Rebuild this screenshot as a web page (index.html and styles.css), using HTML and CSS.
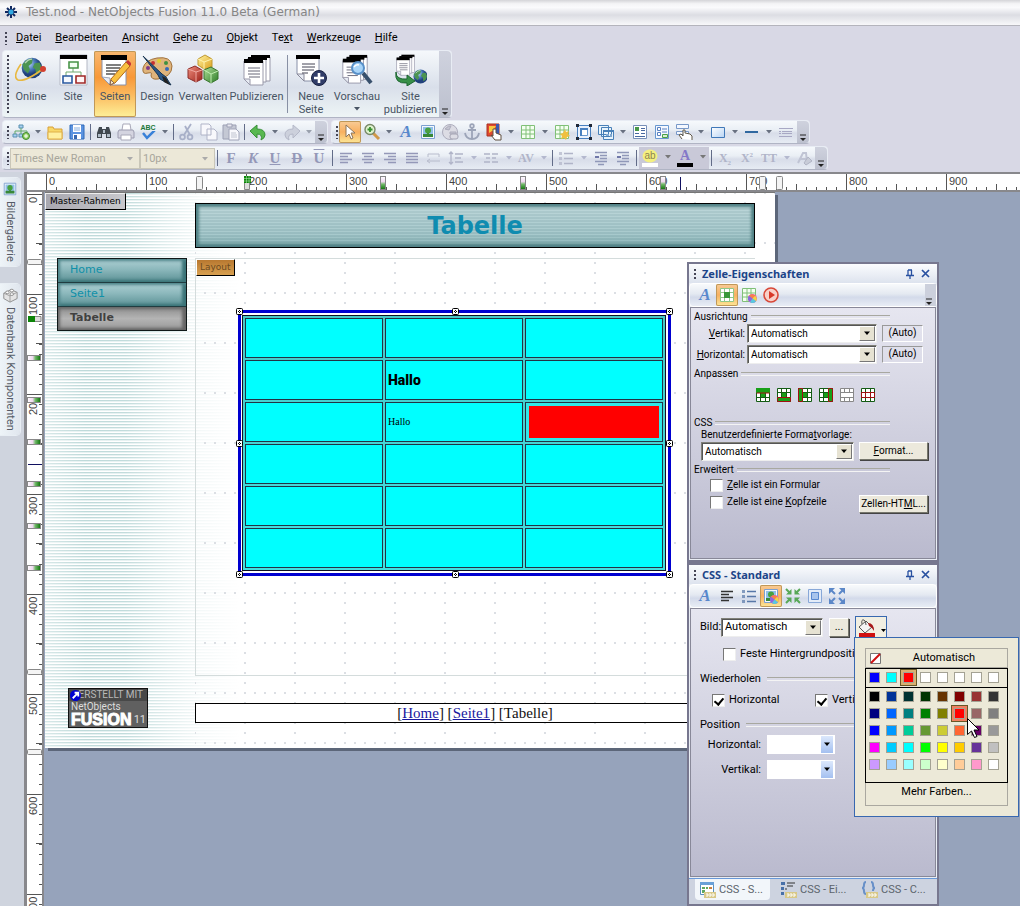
FILE: index.html
```html
<!DOCTYPE html>
<html lang="de">
<head>
<meta charset="utf-8">
<title>Test.nod - NetObjects Fusion 11.0 Beta (German)</title>
<link rel="stylesheet" href="styles.css">
</head>
<body>
<svg class="sprite" aria-hidden="true">
  <defs>
    <radialGradient id="g-globe" cx=".35" cy=".3"><stop offset="0" stop-color="#b8d8f8"/><stop offset=".6" stop-color="#4a78b8"/><stop offset="1" stop-color="#20407c"/></radialGradient>
    <linearGradient id="g-red" x2="1" y2="1"><stop offset="0" stop-color="#f09080"/><stop offset="1" stop-color="#9c2018"/></linearGradient>
    <linearGradient id="g-grn" x2="1" y2="1"><stop offset="0" stop-color="#b0e098"/><stop offset="1" stop-color="#2c7c28"/></linearGradient>
    <linearGradient id="g-yel" x2="1" y2="1"><stop offset="0" stop-color="#fff4a0"/><stop offset="1" stop-color="#dca020"/></linearGradient>
    <linearGradient id="g-blu" x2="1" y2="1"><stop offset="0" stop-color="#fff"/><stop offset="1" stop-color="#b8d4f4"/></linearGradient>
    <linearGradient id="g-mark" x2="0" y2="1"><stop offset="0" stop-color="#fff"/><stop offset=".4" stop-color="#f0d8f0"/><stop offset=".6" stop-color="#70b868"/><stop offset="1" stop-color="#0c7008"/></linearGradient>
    <linearGradient id="g-markh"><stop offset="0" stop-color="#fff"/><stop offset=".4" stop-color="#f0d8f0"/><stop offset=".6" stop-color="#70b868"/><stop offset="1" stop-color="#0c7008"/></linearGradient>
  </defs>
  <symbol id="globe" viewBox="0 0 32 32"><circle cx="16" cy="16" r="15" fill="url(#g-globe)"/><path d="M7 5q7-4 10-2l-1 6-5 4 2 5-3 6-6-6-2-7zM20 9l7-1 3 7-3 8-5 3-1-8-4-3z" fill="#4c9450"/><path d="M6 9q4-6 10-6" stroke="#fff" stroke-width="2" fill="none" opacity=".6"/></symbol>
  <symbol id="page" viewBox="0 0 32 32"><path d="M3 2h24v29H11l-8-8z" fill="#fff" stroke="#8890a8"/><path d="M3 23l8 8v-7z" fill="#e8ecf4" stroke="#8890a8" stroke-width=".8"/><path d="M2 1h26v5H2z" fill="#000"/></symbol>
  <symbol id="pages" viewBox="0 0 32 32"><path d="M10 3h19v24H10z" fill="#fff" stroke="#99a"/><path d="M10 1h19v3H10z"/><path d="M7 4h18v24H7z" fill="#fff" stroke="#99a"/><path d="M7 3h19v3H7z"/><path d="M3 7h19v24H9l-6-6z" fill="#fff" stroke="#99a"/><path d="M3 5h19v4H3z"/><path d="M3 25l6 6v-6z" fill="#e8ecf4" stroke="#99a"/><path d="M7 14h12M7 17h12M7 20h12M8 23h11" stroke="#667"/></symbol>
  <symbol id="i-online" viewBox="0 0 32 32"><use href="#globe" x="6" y="3" width="22" height="22"/><path d="M6 10Q-3 23 3 26 11 28 29 14" fill="none" stroke="#e8b840" stroke-width="1.6"/><circle cx="28" cy="15" r="3" fill="#d44030"/></symbol>
  <symbol id="i-site" viewBox="0 0 32 32"><path d="M3 1h27v30H3z" fill="#fff" stroke="#b4b8c4"/><path d="M3 1h27v4H3z"/><path d="M16 14v4M9 23v-5h15v5" fill="none" stroke="#70a870"/><g stroke-width="1.6"><path d="M12 8h9v6h-9z" fill="#f4fff4" stroke="#489448"/><path d="M6 22h9v7H6z" fill="#f4f8ff" stroke="#2858a0"/><path d="M19 22h9v7h-9z" fill="#fff4f4" stroke="#a02828"/></g></symbol>
  <symbol id="i-seiten" viewBox="0 0 32 32"><use href="#page" width="32" height="32"/><path d="M7 11h15M7 14h14M7 17h12M7 20h9" stroke="#555" stroke-width="1.4"/><path d="M27 8l4 4-15 17-5 2 1-6z" fill="#f8c040" stroke="#b06818"/><path d="M27 8l2-2 4 4-2 2z" fill="#c83838"/><path d="M11 31l1-5 3 3z" fill="#fff0c8" stroke="#865"/></symbol>
  <symbol id="i-design" viewBox="0 0 32 32"><path d="M16 4q14-2 15 8 0 11-14 13-7 1-7-4 2-3-3-2-6 2-5-5Q4 6 16 4z" fill="#dfb47c" stroke="#a07038"/><g><circle cx="12" cy="9" r="2" fill="#c83030"/><circle cx="18" cy="7" r="2" fill="#e0d030"/><circle cx="25" cy="9" r="2" fill="#409040"/><circle cx="26" cy="15" r="2" fill="#3868b8"/><circle cx="7" cy="14" r="2" fill="#803888"/></g><path d="M2 2l19 18 4 3 3 5 2 3-6-3-5-3-2-4z" fill="#2c5888" stroke="#183450"/><path d="M21 22l4 2 4 7-6-3z" fill="#222"/></symbol>
  <symbol id="i-verwalten" viewBox="0 0 32 32"><path d="M11 5l7-4 7 4v8l-8 2-6-4z" fill="url(#g-yel)" stroke="#c09830"/><path d="M11 5l6 3 8-3M17 8v7" stroke="#fff4b0" fill="none"/><path d="M1 15l7-3 7 4v9l-6 3-8-4z" fill="url(#g-red)" stroke="#8c2c28"/><path d="M1 15l8 3 6-2M9 18v10" stroke="#f0a8a0" fill="none"/><path d="M17 16l7-3 7 4v8l-7 4-7-4z" fill="url(#g-grn)" stroke="#38742c"/><path d="M17 16l7 4 7-3M24 20v9" stroke="#c0ecb0" fill="none"/></symbol>
  <symbol id="i-neu" viewBox="0 0 32 32"><path d="M2 2h22v25H9l-7-7z" fill="#fff" stroke="#8890a8"/><path d="M2 20l7 7v-7z" fill="#e8ecf4" stroke="#889"/><path d="M1 1h24v4H1z"/><path d="M7 10h13M7 13h13M7 16h12M7 19h6" stroke="#445"/><circle cx="24" cy="24" r="7.500" fill="#303c68" stroke="#182040"/><path d="M24 19v10M19 24h10" stroke="#fff" stroke-width="2.600"/></symbol>
  <symbol id="i-vorschau" viewBox="0 0 32 32"><use href="#pages" x="-1" width="30" height="30"/><path d="M22 19l8 10" stroke="#38506c" stroke-width="4"/><circle cx="17" cy="14" r="6" fill="#a8d4f8" stroke="#5890c8" stroke-width="2"/><path d="M13 13q2-3 5-2" stroke="#fff" fill="none" stroke-width="1.500"/></symbol>
  <symbol id="i-sitepub" viewBox="0 0 32 32"><use href="#pages" x="-1" y="0" width="23" height="22"/><use href="#globe" x="18" y="15" width="15" height="15"/><path d="M1 18q0 8 11 7v-4l8 6-8 5v-3Q-1 30 1 18z" fill="#389048" stroke="#1c6430"/></symbol>
  <symbol id="i-new" viewBox="0 0 18 18"><path d="M7 2h4v3H7zM1 11h4v3H1zM7 11h4v3H7z" fill="#a8d0f0" stroke="#5890b0"/><path d="M9 5v6M3 11V8h12v2" fill="none" stroke="#60a868"/><circle cx="14" cy="13" r="3.500" fill="#90d060" stroke="#408830"/><path d="M14 11v4M12 13h4" stroke="#fff"/></symbol>
  <symbol id="i-folder" viewBox="0 0 18 18"><path d="M2 4h5l1 2h8v10H2z" fill="#f8d868" stroke="#d8a038"/><path d="M2 9h14v7H2z" fill="#fff0a0" stroke="#e0b048"/></symbol>
  <symbol id="i-save" viewBox="0 0 18 18"><path d="M2 2h14v14H2z" fill="#5c94e0" stroke="#2c68b8"/><path d="M5 2h8v7H5zM5 11h8v5H5z" fill="#fff"/><path d="M6 5h6M6 7h6" stroke="#88b0e0"/><path d="M6 12h3v4H6z" fill="#3868b0"/></symbol>
  <symbol id="i-find" viewBox="0 0 18 18"><path d="M4 4h3v2h4V4h3l2 6v5h-5v-4H7v4H2v-5z" fill="#404850"/><path d="M3 11h3v3H3zM12 11h3v3h-3zM8 7h2v3H8z" fill="#b0bcc8"/></symbol>
  <symbol id="i-print" viewBox="0 0 18 18"><path d="M5 7l1-6h7l1 6" fill="#fff" stroke="#a8a8b8"/><path d="M2 7h14l1 2v6H1V9z" fill="#d4d4e0" stroke="#9c9cb0"/><path d="M4 12h10v5H4z" fill="#fff" stroke="#a8a8b8"/></symbol>
  <symbol id="i-tick" viewBox="0 0 18 10"><path d="M4 2l4 5 8-8" fill="none" stroke="#3880d8" stroke-width="2.500"/></symbol>
  <symbol id="i-cut" viewBox="0 0 18 18"><g fill="none" stroke="#a8b0c8" stroke-width="1.800"><path d="M13 1L6 12M7 3l5 9"/><circle cx="4.500" cy="14" r="2.400"/><circle cx="12" cy="14" r="2.400"/></g></symbol>
  <symbol id="i-copy" viewBox="0 0 18 18"><path d="M1 1h8l2 2v9H1zM7 6h7l3 3v8H7z" fill="#f8f8fc" stroke="#b0b4c8"/></symbol>
  <symbol id="i-paste" viewBox="0 0 18 18"><path d="M1 2h13v14H1z" fill="#c4c8d4" stroke="#9ca0b4"/><path d="M5 1h5v3H5z" fill="#e8e8f0" stroke="#9ca0b4"/><path d="M7 6h7l3 3v8H7z" fill="#f8f8fc" stroke="#a0a4b8"/><path d="M9 10h5M9 12h6M9 14h6" stroke="#c0c4d0"/></symbol>
  <symbol id="i-undo" viewBox="0 0 18 18"><path d="M1 8l7-6v4q8 0 8 6 0 3-4 5 2-6-4-6v4z" fill="#58b850" stroke="#389038"/></symbol>
  <symbol id="i-redo" viewBox="0 0 18 18"><path d="M17 8l-7-6v4q-8 0-8 6 0 3 4 5-2-6 4-6v4z" fill="#ccd0dc" stroke="#b4b8c8"/></symbol>
  <symbol id="i-cursor" viewBox="0 0 18 18"><path d="M5 2v12l3-3 2 5 2-1-2-5h4z" fill="#fff" stroke="#8c7458"/></symbol>
  <symbol id="i-zoom" viewBox="0 0 18 18"><path d="M10 10l6 6" stroke="#d09848" stroke-width="3"/><circle cx="7" cy="6.500" r="5" fill="#e0f4d0" stroke="#788868" stroke-width="1.400"/><path d="M7 4v5M4.500 6.500h5" stroke="#389030" stroke-width="1.800"/></symbol>
  <symbol id="i-image" viewBox="0 0 18 18"><path d="M2.500 2.500h13v13h-13z" fill="#f4f8fc" stroke="#7ca0d0"/><path d="M4 4h10v10H4z" fill="#90c0e8"/><path d="M4 11h10v3H4zM8 9h2v3H8z" fill="#388838"/><circle cx="9" cy="7.500" r="3" fill="#48a040"/></symbol>
  <symbol id="i-globeoff" viewBox="0 0 18 18"><circle cx="9" cy="9" r="7.500" fill="#dcdce4" stroke="#acacbc"/><path d="M4 6q4-4 6-3l-2 4zM9 9h6v2H9z" fill="#c4c4d0" stroke="#acacbc"/><rect x="9" y="11" width="8" height="5" rx="2" fill="#dcdce4" stroke="#a4a4b4"/></symbol>
  <symbol id="i-anchor" viewBox="0 0 18 18"><g fill="none" stroke="#9ca4b8" stroke-width="1.800"><circle cx="9" cy="3" r="1.800"/><path d="M9 5v11M5 7h8M2 10q1 6 7 6t7-6"/></g></symbol>
  <symbol id="i-hot" viewBox="0 0 18 18"><path d="M2 1h12v12H2z" fill="#e04830" stroke="#a83020"/><path d="M11 1h3v12h-3z" fill="#3858b0"/><path d="M4 3h7l-2 3 2 3-4-1-3 2z" fill="#f8c840"/><path d="M8 6v7l-2-1 4 5h6v-5l-5-2V6z" fill="#fff" stroke="#605040"/></symbol>
  <symbol id="i-table" viewBox="0 0 18 18"><path d="M2.500 2.500h13v13h-13zM2.500 7h13M2.500 11h13M7 2.500v13M11 2.500v13" fill="#f4fff0" stroke="#80c078"/></symbol>
  <symbol id="i-tablestar" viewBox="0 0 18 18"><use href="#i-table" width="18" height="18"/><path d="M12 6l1 3 3-1-1 3 2 2-3 1-1 3-2-2-3 1 1-3-2-2 3-1z" fill="#f0c040"/></symbol>
  <symbol id="i-frame" viewBox="0 0 18 18"><path d="M2.500 2.500h13v13h-13z" fill="#e8f0fc" stroke="#4880c0"/><path d="M5.500 5.500h7v7h-7z" fill="#fff" stroke="#6898d0"/><path d="M5 5h8v2H5zM5 5h2v8H5z" fill="#4880c0"/><path d="M1 1h3v3H1zM14 1h3v3h-3zM1 14h3v3H1zM14 14h3v3h-3z" fill="#202838"/></symbol>
  <symbol id="i-layers" viewBox="0 0 18 18"><g fill="#e8f4fc" stroke="#4880b8"><path d="M1.500 2.500h10v9h-10zM4.500 4.500h10v9h-10zM6.500 7.500h10v9h-10z"/></g><path d="M6 7h11v2H6z" fill="#4880b8"/><path d="M9 11h3v2H9zM13 11h2v3h-2z" fill="#80a8d0"/></symbol>
  <symbol id="i-form1" viewBox="0 0 18 18"><path d="M2.500 2.500h13v13h-13z" fill="#fff" stroke="#7890b8"/><path d="M4 4h4v4H4z" fill="#489848"/><path d="M10 5.500h4M10 7.500h4M4 10.500h4M10 10.500h4M4 13.500h10" stroke="#4868a0"/></symbol>
  <symbol id="i-form2" viewBox="0 0 18 18"><path d="M2.500 2.500h13v13h-13z" fill="#f4f8ff" stroke="#6898d0"/><path d="M4.500 4.500h3v3h-3zM4.500 9.500h3v3h-3z" fill="#fff" stroke="#5880c0"/><path d="M9 6h5M9 9h5" stroke="#5880c0"/><path d="M9.500 11.500h5v3h-5z" fill="#d8f0d0" stroke="#48a048"/></symbol>
  <symbol id="i-formhand" viewBox="0 0 18 18"><path d="M1.500 1.500h12v4h-12zM1.500 8.500h12v3h-12z" fill="#f4f8ff" stroke="#7898c8"/><path d="M7 16l-3-4 2-1 2 2V7h2v3l5 1 2 2v4" fill="#fff" stroke="#605848"/></symbol>
  <symbol id="i-rect" viewBox="0 0 18 18"><path d="M2.500 4.500h13v10h-13z" fill="url(#g-blu)" stroke="#4078b8"/></symbol>
  <symbol id="i-line" viewBox="0 0 18 18"><path d="M2 9h13" stroke="#3068a0" stroke-width="2"/></symbol>
  <symbol id="i-marquee" viewBox="0 0 18 18"><path d="M2 5.500h14M2 8.500h2M5 8.500h10M2 10.500h2M5 10.500h10M2 13.500h13" stroke="#a8a8c4"/></symbol>
  <symbol id="i-left" viewBox="0 0 18 18"><path d="M3 4.500h12M3 7.500h8M3 10.500h12M3 13.500h8" stroke="currentColor" stroke-width="1.500"/></symbol>
  <symbol id="i-center" viewBox="0 0 18 18"><path d="M3 4.500h12M5 7.500h8M3 10.500h12M5 13.500h8" stroke="currentColor" stroke-width="1.500"/></symbol>
  <symbol id="i-right" viewBox="0 0 18 18"><path d="M3 4.500h12M7 7.500h8M3 10.500h12M7 13.500h8" stroke="currentColor" stroke-width="1.500"/></symbol>
  <symbol id="i-just" viewBox="0 0 18 18"><path d="M3 4.500h12M3 7.500h12M3 10.500h12M3 13.500h12" stroke="currentColor" stroke-width="1.500"/></symbol>
  <symbol id="i-wrap" viewBox="0 0 18 18"><path d="M3 8V5h11v3M3 12h12M5 10l-3 2 3 2" fill="none" stroke="#b8bccc"/></symbol>
  <symbol id="i-spacing" viewBox="0 0 18 18"><path d="M4 3v12M2 5l2-2 2 2M2 13l2 2 2-2M8 5h8M8 9h6M8 13h8" fill="none" stroke="#b0b4c8" stroke-width="1.300"/></symbol>
  <symbol id="i-para" viewBox="0 0 18 18"><path d="M2 5h6M10 5h6M4 9h4M10 9h4M2 13h6M10 13h6" stroke="#b0b4c8" stroke-width="1.500"/></symbol>
  <symbol id="i-list" viewBox="0 0 18 18"><path d="M7 4.500h9M7 9.500h9M7 14.500h9" stroke="currentColor" stroke-width="1.300"/><path d="M2 3h3v3H2zM2 8h3v3H2zM2 13h3v3H2z" fill="currentColor" opacity=".7"/></symbol>
  <symbol id="i-indent" viewBox="0 0 18 18"><path d="M3 3.500h12M8 6.500h7M8 9.500h7M3 12.500h12M6 15.500h6" stroke="#9098b8" stroke-width="1.500"/><path d="M3 8h4" stroke="#7078a8" stroke-width="2"/></symbol>
  <symbol id="i-brush" viewBox="0 0 18 18"><path d="M3 14l5-10h3l1 9M5 10h6" stroke="#c0c4d4" stroke-width="2" fill="none"/><path d="M13 8l4 4-6 4-2-2z" fill="#c8ccd8" stroke="#b0b4c4"/></symbol>
  <symbol id="i-tcell" viewBox="0 0 18 18"><path d="M2.500 2.500h13v13h-13zM2.500 6.500h13M2.500 11.500h13M6.500 2.500v13M11.500 2.500v13" fill="#fff" stroke="#90c888"/><path d="M6 6h6v6H6z" fill="#389838"/></symbol>
  <symbol id="wheel" viewBox="0 0 10 10"><circle cx="5" cy="5" r="5" fill="#f060a0"/><path d="M5 5L1 2a5 5 0 0 1 7 0z" fill="#f88048"/><path d="M5 5L8 2a5 5 0 0 1 1 6z" fill="#f0d840"/><path d="M5 5l4 3a5 5 0 0 1-7 1z" fill="#58c8e0"/><path d="M5 5l-3 4a5 5 0 0 1-1-7z" fill="#8868e0"/></symbol>
  <symbol id="i-tcolor" viewBox="0 0 18 18"><use href="#i-table" width="18" height="18"/><use href="#wheel" x="8" y="8" width="9" height="9"/></symbol>
  <symbol id="i-play" viewBox="0 0 18 18"><circle cx="9" cy="9" r="7" fill="#f8d0c8" stroke="#d84838" stroke-width="1.600"/><path d="M7 5l6 4-6 4z" fill="#d83828"/></symbol>
  <symbol id="i-imgcolor" viewBox="0 0 18 18"><use href="#i-image" width="18" height="18"/><use href="#wheel" x="8" y="8" width="9" height="9"/></symbol>
  <symbol id="i-in" viewBox="0 0 18 18"><path d="M7.500 2v5.500H2zM10.500 2v5.500H16zM7.500 16v-5.500H2zM10.500 16v-5.500H16z" fill="#58a858"/><path d="M2 2l4 4M16 2l-4 4M2 16l4-4M16 16l-4-4" stroke="#58a858" stroke-width="2"/></symbol>
  <symbol id="i-box" viewBox="0 0 18 18"><path d="M2.500 2.500h13v13h-13z" fill="#e4ecf8" stroke="#88a8d8"/><path d="M5.500 5.500h7v7h-7z" fill="#a8c4ec" stroke="#5888d0"/></symbol>
  <symbol id="i-out" viewBox="0 0 18 18"><path d="M1 1h6L1 7zM17 1h-6l6 6zM1 17h6l-6-6zM17 17h-6l6-6z" fill="#5c88c8"/><path d="M2 2l5 5M16 2l-5 5M2 16l5-5M16 16l-5-5" stroke="#5c88c8" stroke-width="2"/></symbol>
  <symbol id="cells" viewBox="0 0 14 14"><path d="M.5.5h13v13H.5zM.5 4.500h13M.5 9.500h13M4.500.5v13M9.500.5v13" fill="#fff" stroke="currentColor"/></symbol>
  <symbol id="arr" viewBox="0 0 6 4"><path d="M0 0h6L3 3.500z" fill="currentColor"/></symbol>
  <symbol id="more" viewBox="0 0 8 8"><path d="M1 1h6" stroke="#222"/><path d="M1 4h6L4 7z" fill="#222"/></symbol>
  <symbol id="pin" viewBox="0 0 10 10"><path d="M3 1h4M3 1v5M6.500 1v5M1 6.500h8M5 6v4" stroke="#2850a0" fill="none" stroke-width="1.300"/></symbol>
  <symbol id="close" viewBox="0 0 10 10"><path d="M1 1l7 7M8 1L1 8" stroke="#2850a0" stroke-width="1.700"/></symbol>
  <symbol id="handle" viewBox="0 0 7 7"><rect x=".5" y=".5" width="6" height="6" rx="1" fill="#fff" stroke="#000"/><path d="M3 2h1v1H3zM2 3h1v1H2zM4 3h1v1H4zM3 4h1v1H3z"/></symbol>
</svg>

<div class="app">
  <header class="titlebar">
    <svg class="appicon" viewBox="0 0 12 12"><path d="M6 0v12M0 6h12M2 2l8 8M10 2l-8 8" stroke="#102860" stroke-width="2"/><circle cx="6" cy="6" r="2.500" fill="#30a8e0"/></svg>
    <h1>Test.nod - NetObjects Fusion 11.0 Beta (German)</h1>
  </header>

  <nav class="menubar">
    <i class="grip"></i>
    <button><u>D</u>atei</button><button><u>B</u>earbeiten</button><button><u>A</u>nsicht</button><button><u>G</u>ehe zu</button><button><u>O</u>bjekt</button><button>Te<u>x</u>t</button><button><u>W</u>erkzeuge</button><button><u>H</u>ilfe</button>
  </nav>

  <div class="bars">
    <div class="bar big">
      <i class="grip"></i>
      <button><svg><use href="#i-online"/></svg>Online</button>
      <button><svg><use href="#i-site"/></svg>Site</button>
      <button class="on"><svg><use href="#i-seiten"/></svg>Seiten</button>
      <button><svg><use href="#i-design"/></svg>Design</button>
      <button class="wide"><svg><use href="#i-verwalten"/></svg>Verwalten</button>
      <button class="wider"><svg><use href="#pages"/></svg>Publizieren</button>
      <i class="sep"></i>
      <button><svg><use href="#i-neu"/></svg>Neue<br>Seite</button>
      <button class="wide"><svg><use href="#i-vorschau"/></svg>Vorschau<svg class="arr"><use href="#arr"/></svg></button>
      <button class="wider"><svg><use href="#i-sitepub"/></svg>Site<br>publizieren</button>
      <button class="more" aria-label="Mehr"><svg><use href="#more"/></svg></button>
    </div>
    <div class="barrow">
      <div class="bar">
        <i class="grip"></i>
        <button class="t" aria-label="Neu"><svg><use href="#i-new"/></svg></button><button class="d" aria-label="Menü"><svg><use href="#arr"/></svg></button>
        <button class="t" aria-label="Öffnen"><svg><use href="#i-folder"/></svg></button>
        <button class="t" aria-label="Speichern"><svg><use href="#i-save"/></svg></button><i class="sep"></i>
        <button class="t" aria-label="Suchen"><svg><use href="#i-find"/></svg></button>
        <button class="t" aria-label="Drucken"><svg><use href="#i-print"/></svg></button>
        <button class="t abc" aria-label="Rechtschreibung"><span>ABC</span><svg><use href="#i-tick"/></svg></button><button class="d" aria-label="Menü"><svg><use href="#arr"/></svg></button><i class="sep"></i>
        <button class="t" aria-label="Ausschneiden"><svg><use href="#i-cut"/></svg></button>
        <button class="t" aria-label="Kopieren"><svg><use href="#i-copy"/></svg></button>
        <button class="t" aria-label="Einfügen"><svg><use href="#i-paste"/></svg></button><i class="sep"></i>
        <button class="t" aria-label="Rückgängig"><svg><use href="#i-undo"/></svg></button><button class="d" aria-label="Menü"><svg><use href="#arr"/></svg></button>
        <button class="t" aria-label="Wiederholen"><svg><use href="#i-redo"/></svg></button><button class="d off" aria-label="Menü"><svg><use href="#arr"/></svg></button>
        <button class="more" aria-label="Mehr"><svg><use href="#more"/></svg></button>
      </div>
      <div class="bar">
        <i class="grip"></i>
        <button class="t on" aria-label="Auswahl"><svg><use href="#i-cursor"/></svg></button>
        <button class="t" aria-label="Zoom"><svg><use href="#i-zoom"/></svg></button><button class="d" aria-label="Menü"><svg><use href="#arr"/></svg></button>
        <button class="t textA">A</button>
        <button class="t" aria-label="Bild"><svg><use href="#i-image"/></svg></button>
        <button class="t" aria-label="Link"><svg><use href="#i-globeoff"/></svg></button>
        <button class="t" aria-label="Anker"><svg><use href="#i-anchor"/></svg></button>
        <button class="t" aria-label="Hotspot"><svg><use href="#i-hot"/></svg></button><button class="d" aria-label="Menü"><svg><use href="#arr"/></svg></button>
        <button class="t" aria-label="Tabelle"><svg><use href="#i-table"/></svg></button><button class="d" aria-label="Menü"><svg><use href="#arr"/></svg></button>
        <button class="t" aria-label="Neue Tabelle"><svg><use href="#i-tablestar"/></svg></button>
        <button class="t" aria-label="Rahmen"><svg><use href="#i-frame"/></svg></button>
        <button class="t" aria-label="Ebenen"><svg><use href="#i-layers"/></svg></button><button class="d" aria-label="Menü"><svg><use href="#arr"/></svg></button>
        <button class="t" aria-label="Artikel"><svg><use href="#i-form1"/></svg></button>
        <button class="t" aria-label="Formular"><svg><use href="#i-form2"/></svg></button>
        <button class="t" aria-label="Formularfeld"><svg><use href="#i-formhand"/></svg></button><button class="d" aria-label="Menü"><svg><use href="#arr"/></svg></button>
        <button class="t" aria-label="Rechteck"><svg><use href="#i-rect"/></svg></button><button class="d" aria-label="Menü"><svg><use href="#arr"/></svg></button>
        <button class="t" aria-label="Linie"><svg><use href="#i-line"/></svg></button><button class="d" aria-label="Menü"><svg><use href="#arr"/></svg></button>
        <button class="t" aria-label="Laufschrift"><svg><use href="#i-marquee"/></svg></button>
        <button class="more" aria-label="Mehr"><svg><use href="#more"/></svg></button>
      </div>
    </div>
    <div class="bar fmt">
      <i class="grip"></i>
      <span class="drop font"><select aria-label="Schriftart" disabled><option>Times New Roman</option></select><svg><use href="#arr"/></svg></span>
      <span class="drop size"><select aria-label="Schriftgröße" disabled><option>10px</option></select><svg><use href="#arr"/></svg></span>
      <i class="sep"></i>
      <button class="t ch"><b>F</b></button><button class="t ch"><em>K</em></button><button class="t ch"><u>U</u></button><button class="t ch"><s>D</s></button><button class="t ch"><span class="over">U</span></button>
      <i class="sep"></i>
      <button class="t" aria-label="Links"><svg><use href="#i-left"/></svg></button><button class="t" aria-label="Zentriert"><svg><use href="#i-center"/></svg></button><button class="t" aria-label="Rechts"><svg><use href="#i-right"/></svg></button><button class="t" aria-label="Blocksatz"><svg><use href="#i-just"/></svg></button>
      <button class="t" aria-label="Umbruch"><svg><use href="#i-wrap"/></svg></button>
      <button class="t" aria-label="Zeilenabstand"><svg><use href="#i-spacing"/></svg></button><button class="d off" aria-label="Menü"><svg><use href="#arr"/></svg></button>
      <button class="t" aria-label="Absatz"><svg><use href="#i-para"/></svg></button><button class="d off" aria-label="Menü"><svg><use href="#arr"/></svg></button>
      <button class="t ch sm lt">AV</button><button class="d off" aria-label="Menü"><svg><use href="#arr"/></svg></button>
      <i class="sep"></i>
      <button class="t lt" aria-label="Liste"><svg><use href="#i-list"/></svg></button><button class="d off" aria-label="Menü"><svg><use href="#arr"/></svg></button>
      <button class="t" aria-label="Ausrücken"><svg><use href="#i-indent"/></svg></button><button class="t" aria-label="Einrücken"><svg><use href="#i-indent"/></svg></button>
      <i class="sep"></i>
      <span class="dark"><button class="t ink mark"><span>ab</span></button><button class="d" aria-label="Menü"><svg><use href="#arr"/></svg></button><button class="t ink"><span>A</span></button><button class="d" aria-label="Menü"><svg><use href="#arr"/></svg></button></span>
      <i class="sep"></i>
      <button class="t ch sm lt">X<sub>2</sub></button><button class="t ch sm lt">X<sup>2</sup></button><button class="t ch sm lt">TT</button><button class="d off" aria-label="Menü"><svg><use href="#arr"/></svg></button>
      <button class="t" aria-label="Pinsel"><svg><use href="#i-brush"/></svg></button>
      <button class="more" aria-label="Mehr"><svg><use href="#more"/></svg></button>
    </div>
  </div>

  <main class="work">
    <aside class="dock">
      <button><svg><use href="#i-image"/></svg>Bildergalerie</button>
      <button><svg viewBox="0 0 18 18"><path d="M2 7l8-4 7 3v7l-8 4-7-4z" fill="#e4e4e4" stroke="#888"/><path d="M2 7l7 3 8-4M9 10v7" fill="none" stroke="#999"/><ellipse cx="6" cy="6" rx="2" ry="1.500" fill="#fff" stroke="#888"/><ellipse cx="11" cy="4" rx="2" ry="1.500" fill="#fff" stroke="#888"/><ellipse cx="11" cy="8" rx="2" ry="1.500" fill="#fff" stroke="#888"/></svg>Datenbank Komponenten</button>
    </aside>

    <div class="ruler-h">
      <span>0</span><span>100</span><span>200</span><span>300</span><span>400</span><span>500</span><span>600</span><span>700</span><span>800</span><span>900</span>
      <svg class="marks">
        <g fill="#f4f4f4" stroke="#888"><rect x="169.500" y="2.500" width="6" height="13" rx="1"/><rect x="732.500" y="2.500" width="6" height="13" rx="1"/><rect x="749.500" y="2.500" width="6" height="13" rx="1"/></g>
        <path d="M217.500 8.500h5v7h-5z" fill="#ddd" stroke="#888"/><path d="M217 2h7v7h-7z" fill="#0c8408"/><path d="M219.500 2v7M222 2v7M217 4.500h7M217 7h7" stroke="#c0f0c0" stroke-width=".5"/>
        <g fill="url(#g-mark)" stroke="#888"><rect x="353.500" y="2.500" width="5" height="13"/><rect x="493.500" y="2.500" width="5" height="13"/><rect x="633.500" y="2.500" width="5" height="13"/></g>
        <path d="M653.500 3v13" stroke="#101060"/>
      </svg>
    </div>
    <div class="ruler-v">
      <span>0</span><span>100</span><span>200</span><span>300</span><span>400</span><span>500</span><span>600</span><span>700</span>
      <svg class="marks">
        <g fill="#f4f4f4" stroke="#888"><rect x="0.500" y="67.500" width="14" height="5" rx="1"/><rect x="0.500" y="477.500" width="14" height="5" rx="1"/><rect x="0.500" y="557.500" width="14" height="5" rx="1"/></g>
        <path d="M7 124.500h7v5H7z" fill="#ddd" stroke="#888"/><path d="M1 124h7v6H1z" fill="#0c8408"/>
        <g fill="url(#g-markh)" stroke="#888"><rect x="0.500" y="163.500" width="13" height="5"/><rect x="0.500" y="205.500" width="13" height="5"/><rect x="0.500" y="247.500" width="13" height="5"/><rect x="0.500" y="289.500" width="13" height="5"/><rect x="0.500" y="331.500" width="13" height="5"/><rect x="0.500" y="373.500" width="13" height="5"/></g>
        <path d="M1 272.500h16" stroke="#101060"/>
      </svg>
    </div>

    <div class="canvas">
      <article class="page">
        <div class="side">
          <span class="tag">Master-Rahmen</span>
          <nav class="sitenav"><a href="#">Home</a><a href="#">Seite1</a><a href="#" class="cur">Tabelle</a></nav>
          <div class="built">
            <div class="built-top">ERSTELLT MIT</div>
            <div class="built-mid">NetObjects</div>
            <div class="built-name"><b>FUSION</b>11</div>
            <svg viewBox="0 0 12 12"><circle cx="6" cy="6" r="6" fill="#0000d0"/><path d="M3 9l5-5M5 3h4v4" fill="none" stroke="#fff" stroke-width="2"/></svg>
          </div>
        </div>
        <div class="content">
          <h2 class="banner">Tabelle</h2>
          <section class="layout">
            <span class="tag orange">Layout</span>
            <div class="sel">
              <table>
                <tr><td></td><td></td><td></td></tr>
                <tr><td></td><td class="impact">Hallo</td><td></td></tr>
                <tr><td></td><td class="small">Hallo</td><td class="red"></td></tr>
                <tr><td></td><td></td><td></td></tr>
                <tr><td></td><td></td><td></td></tr>
                <tr><td></td><td></td><td></td></tr>
              </table>
              <svg class="h tl"><use href="#handle"/></svg><svg class="h tc"><use href="#handle"/></svg><svg class="h tr"><use href="#handle"/></svg><svg class="h ml"><use href="#handle"/></svg><svg class="h mr"><use href="#handle"/></svg><svg class="h bl"><use href="#handle"/></svg><svg class="h bc"><use href="#handle"/></svg><svg class="h br"><use href="#handle"/></svg>
            </div>
          </section>
          <nav class="textnav">[<a href="#">Home</a>] [<a href="#">Seite1</a>] [Tabelle]</nav>
        </div>
      </article>
    </div>
  </main>

  <div class="palettes">
    <section class="palette p1">
      <header><i class="grip"></i><h3>Zelle-Eigenschaften</h3><button aria-label="Anheften"><svg><use href="#pin"/></svg></button><button aria-label="Schließen"><svg><use href="#close"/></svg></button></header>
      <div class="tools">
        <button class="t textA">A</button><button class="t on" aria-label="Zelle"><svg><use href="#i-tcell"/></svg></button><button class="t" aria-label="Tabellenfarbe"><svg><use href="#i-tcolor"/></svg></button><button class="t" aria-label="Aktionen"><svg><use href="#i-play"/></svg></button>
        <button class="more" aria-label="Mehr"><svg><use href="#more"/></svg></button>
      </div>
      <form class="body narrow">
        <h4>Ausrichtung</h4>
        <div class="align">
          <label for="v"><u>V</u>ertikal:</label>
          <span class="drop"><select id="v"><option>Automatisch</option></select><svg><use href="#arr"/></svg></span><output>(Auto)</output>
          <label for="hz"><u>H</u>orizontal:</label>
          <span class="drop"><select id="hz"><option>Automatisch</option></select><svg><use href="#arr"/></svg></span><output>(Auto)</output>
        </div>
        <h4>Anpassen</h4>
        <div class="fit">
          <button type="button" aria-label="Oben"><svg viewBox="0 0 14 14"><use href="#cells"/><path d="M0 0h14v5H0zM5 5h4v4H5z" fill="#18a018"/><path d="M.5 5h13" stroke="#a01010"/></svg></button>
          <button type="button" aria-label="Unten"><svg viewBox="0 0 14 14"><use href="#cells"/><path d="M0 9h14v5H0zM5 5h4v4H5z" fill="#18a018"/><path d="M.5 9.500h13v4H.5z" stroke="#a01010" fill="none"/></svg></button>
          <button type="button" aria-label="Links"><svg viewBox="0 0 14 14"><use href="#cells"/><path d="M0 0h5v14H0zM5 5h4v4H5z" fill="#18a018"/><path d="M.5.5h4v13h-4z" stroke="#a01010" fill="none"/></svg></button>
          <button type="button" aria-label="Rechts"><svg viewBox="0 0 14 14"><use href="#cells"/><path d="M9 0h5v14H9zM5 5h4v4H5z" fill="#18a018"/><path d="M9.500.5h4v13h-4z" stroke="#a01010" fill="none"/></svg></button>
          <button type="button" class="gray" aria-label="Verbinden"><svg viewBox="0 0 14 14"><use href="#cells"/><path d="M1 5h12v4H1z" fill="#fff"/></svg></button>
          <button type="button" aria-label="Teilen"><svg viewBox="0 0 14 14"><use href="#cells"/><path d="M.5 4.500h13v5H.5zM4.500 4.500v5M9.500 4.500v5" stroke="#a01010" fill="none"/></svg></button>
        </div>
        <h4>CSS</h4>
        <label class="over-label" for="fv">Benutzerdefinierte Forma<u>t</u>vorlage:</label>
        <div class="two">
          <span class="drop"><select id="fv"><option>Automatisch</option></select><svg><use href="#arr"/></svg></span>
          <button type="button" class="btn"><u>F</u>ormat...</button>
        </div>
        <h4>Erweitert</h4>
        <div class="checks">
          <label><input type="checkbox"><span><u>Z</u>elle ist ein Formular</span></label>
          <label><input type="checkbox"><span>Zelle ist eine <u>K</u>opfzeile</span></label>
          <button type="button" class="btn">Zellen-HT<u>M</u>L...</button>
        </div>
      </form>
    </section>

    <section class="palette p2">
      <header><i class="grip"></i><h3>CSS - Standard</h3><button aria-label="Anheften"><svg><use href="#pin"/></svg></button><button aria-label="Schließen"><svg><use href="#close"/></svg></button></header>
      <div class="tools">
        <button class="t textA">A</button><button class="t blk" aria-label="Absatz"><svg><use href="#i-left"/></svg></button><button class="t lst" aria-label="Liste"><svg><use href="#i-list"/></svg></button><button class="t on" aria-label="Hintergrund"><svg><use href="#i-imgcolor"/></svg></button><button class="t" aria-label="Innenabstand"><svg><use href="#i-in"/></svg></button><button class="t" aria-label="Rahmen"><svg><use href="#i-box"/></svg></button><button class="t" aria-label="Außenabstand"><svg><use href="#i-out"/></svg></button>
      </div>
      <form class="body">
        <div class="bild">
          <label for="bild">Bild:</label>
          <span class="drop"><select id="bild"><option>Automatisch</option></select><svg><use href="#arr"/></svg></span>
          <button type="button" class="btn dots">...</button>
          <div class="colorpick">
            <button type="button" class="bucket" aria-label="Hintergrundfarbe"><svg viewBox="0 0 30 18"><path d="M3 8l7-6 6 6-7 6z" fill="#f4f4f4" stroke="#555"/><path d="M6 5q-1-5 2-4 2 1 2 5" fill="none" stroke="#555"/><path d="M12 4q6 0 6 8-2-4-5-5z" fill="#a81818"/><path d="M3 14h16v4H3z" fill="#d01010"/><path d="M25 10h5l-2.500 3z"/></svg></button>
            <div class="popup">
              <button type="button" class="auto"><svg viewBox="0 0 11 11"><path d="M.5.5h10v10H.5z" fill="#fff" stroke="#777"/><path d="M1 10l9-9" stroke="#d01010" stroke-width="2"/></svg><span>Automatisch</span></button>
              <div class="sw recent">
                <i class="c-0000ff"></i><i class="c-00ffff"></i><b><i class="c-ff0000"></i></b><i class="c-ffffff"></i><i class="c-ffffff"></i><i class="c-ffffff"></i><i class="c-ffffff"></i><i class="c-ffffff"></i>
              </div>
              <div class="sw grid">
                <i class="c-000000"></i><i class="c-003399"></i><i class="c-003333"></i><i class="c-003300"></i><i class="c-663300"></i><i class="c-800000"></i><i class="c-993333"></i><i class="c-333333"></i>
                <i class="c-000080"></i><i class="c-0066ff"></i><i class="c-008080"></i><i class="c-008000"></i><i class="c-808000"></i><b class="hot"><i class="c-ff0000"></i></b><i class="c-996666"></i><i class="c-808080"></i>
                <i class="c-0000ff"></i><i class="c-0099ff"></i><i class="c-00cc99"></i><i class="c-669933"></i><i class="c-cccc33"></i><i class="c-ff6633"></i><i class="c-660066"></i><i class="c-999999"></i>
                <i class="c-ff00ff"></i><i class="c-00ccff"></i><i class="c-00ffff"></i><i class="c-00ff00"></i><i class="c-ffff00"></i><i class="c-ffcc00"></i><i class="c-663399"></i><i class="c-c0c0c0"></i>
                <i class="c-cc99ff"></i><i class="c-99ccff"></i><i class="c-99ffff"></i><i class="c-ccffcc"></i><i class="c-ffffcc"></i><i class="c-ffcc99"></i><i class="c-ff99cc"></i><i class="c-ffffff"></i>
              </div>
              <button type="button" class="mehr">Mehr Farben...</button>
              <svg class="pointer" viewBox="0 0 12 20"><path d="M.5.500v16l4-3.500 3 6.500 2.500-1-3-6.500h5z" fill="#fff" stroke="#000"/></svg>
            </div>
          </div>
        </div>
        <label class="fixed"><input type="checkbox"><span>Feste Hintergrundposition</span></label>
        <h4>Wiederholen</h4>
        <div class="repeat"><label><input type="checkbox" checked><span>Horizontal</span></label><label><input type="checkbox" checked><span>Vertikal</span></label></div>
        <h4>Position</h4>
        <div class="posgrid">
          <label for="ph">Horizontal:</label><span class="drop blue"><select id="ph"><option></option></select><svg><use href="#arr"/></svg></span>
          <label for="pv">Vertikal:</label><span class="drop blue"><select id="pv"><option></option></select><svg><use href="#arr"/></svg></span>
        </div>
      </form>
      <footer class="tabs">
        <button class="cur"><svg viewBox="0 0 17 17"><path d="M1.500 1.500h13v12h-13z" fill="#fff" stroke="#5890c0"/><path d="M1 1h14v3H1z" fill="#68a0d8"/><path d="M3 6h3v2H3zM7 6h2v2H7zM3 9h3v3H3z" fill="#60a860"/><path d="M10 6h3v2h-3z" fill="#c88040"/><path d="M5 11h12v6H5z" fill="#d8c888"/><path d="M7 13h2v2H7M10 13h2v2h-2M13 13h2v2h-2" fill="none" stroke="#fff"/></svg>CSS - S...</button>
        <button><svg viewBox="0 0 17 17"><path d="M1 1h4v3H1zM1 6h3v3H1zM1 11h3v3H1z" fill="#4870a8"/><path d="M7 2h8M7 5h6M5 8h2M5 12h2" stroke="#333"/><path d="M5 11h12v6H5z" fill="#d8c888"/><path d="M7 13h2v2H7M10 13h2v2h-2M13 13h2v2h-2" fill="none" stroke="#fff"/></svg>CSS - Ei...</button>
        <button><svg viewBox="0 0 17 17"><path d="M5 1Q3 1 3 4t-2 3q2 0 2 3t2 3M10 1q2 0 2 3t2 3q-2 0-2 3" fill="none" stroke="#6890c8" stroke-width="2"/><path d="M5 11h12v6H5z" fill="#d8c888"/><path d="M7 13h2v2H7M10 13h2v2h-2M13 13h2v2h-2" fill="none" stroke="#fff"/></svg>CSS - C...</button>
      </footer>
    </section>
  </div>
</div>
</body>
</html>
```
FILE: styles.css
```css
* { box-sizing: border-box; }
body { margin: 0; font: 11px/14px Roboto, "Noto Sans", sans-serif; color: #111; }
button { font: inherit; color: inherit; border: 0; background: none; padding: 0; margin: 0; }
h1, h2, h3, h4 { margin: 0; font-weight: normal; }
i { font-style: normal; }
.sprite { position: absolute; width: 0; height: 0; }

.app { position: relative; display: flex; flex-direction: column; height: 100vh; overflow: hidden; background: #d8d8e5; }

.titlebar { display: flex; align-items: center; gap: 9px; height: 26px; flex: none; padding: 0 5px 2px; border-bottom: 1px solid #b4b4bc; background: linear-gradient(#d4d4d8, #f4f4f6 15%, #fafafc 30%, #dcdde3 60%, #f8f8fa); }
.titlebar h1 { font: 12px/16px "DejaVu Sans", sans-serif; color: #868686; }
.appicon { width: 12px; height: 12px; }

.menubar { display: flex; align-items: center; height: 24px; flex: none; padding-left: 5px; color: #000; }
.menubar button { padding: 0 7px; }
.menubar .grip { margin-right: 2px; }
.grip { flex: none; width: 2px; height: 13px; background: repeating-linear-gradient(#445 0 2px, transparent 2px 4px); }

.bars { display: flex; flex-direction: column; gap: 2px; flex: none; padding: 0 2px 2px; align-items: flex-start; }
.barrow { display: flex; gap: 3px; }
.bar { display: flex; align-items: center; height: 24px; padding-left: 4px; border: 1px solid #e8ecf4; border-bottom-color: #b0b4c4; border-radius: 4px; background: linear-gradient(#f6f9fc, #eaeff5 40%, #d8dde9 55%, #e6ebf3); color: #687080; }
.bar .grip { margin-right: 1px; }
.bar.big { height: 68px; background: linear-gradient(#f5f8fb, #e6ebf2 30%, #d9dfea 55%, #eef5f6); color: #485464; align-items: stretch; }
.bar.big .grip { height: 58px; margin: 4px 1px 0 0; }
.big button { display: flex; flex-direction: column; align-items: center; width: 42px; padding-top: 3px; line-height: 13px; white-space: nowrap; }
.big button > svg:first-child { width: 32px; height: 32px; margin-bottom: 4px; flex: none; }
.big button.wide { width: 50px; }
.big button.wider { width: 57px; }
.big .arr { width: 6px; height: 4px; margin-top: 4px; }
.on { background: linear-gradient(#f8b870, #f89838 40%, #fbb85c 65%, #fdf098); box-shadow: inset 0 0 0 1px #c09858; border-radius: 2px; }
.t.on { background: linear-gradient(#f8cc98, #f8b060 50%, #fde898); }
.sep { flex: none; width: 1px; height: 16px; margin: 0 2px; background: #626c88; }
.big .sep { height: 58px; margin: 4px 2px; background: #8890a4; }
.t { width: 22px; height: 22px; flex: none; display: grid; place-items: center; }
.t svg { width: 18px; height: 18px; }
.t.abc { align-content: center; font: bold 7px/7px "Liberation Sans", sans-serif; color: #207838; }
.t.abc svg { height: 10px; }
.t.textA { font: italic bold 17px/20px "Liberation Serif", serif; color: #5888cc; }
.d { width: 12px; height: 20px; flex: none; display: grid; place-items: center; }
.d svg { width: 6px; height: 4px; }
.off { opacity: .6; }
.bar .more { align-self: stretch; display: flex; flex-direction: row; align-items: flex-end; justify-content: center; width: 12px; padding: 0 0 1px; border-radius: 0 4px 4px 0; background: linear-gradient(#cfd2de, #bcc0ce); }
.more svg, .big .more > svg:first-child { width: 8px; height: 8px; margin: 0; }
.fmt { color: #9498b8; }
.fmt .d { width: 13px; }
.lt { color: #b0b4c8; }
.ch { font: bold 15px/20px "Liberation Serif", serif; }
.ch.sm { display: block; font-size: 12px; }
.ch sub, .ch sup { font-size: 7px; line-height: 0; }
.over { text-decoration: overline; }
.dark { display: flex; background: #c9c9d8; color: #777; }
.ink { align-content: end; padding-bottom: 2px; }
.ink span { width: 16px; text-align: center; font: bold 14px/14px "Liberation Serif", serif; color: #8478c8; border-bottom: 4px solid #000; }
.ink.mark span { font: 10px/14px "Liberation Sans", sans-serif; color: #8c8450; border-color: #fff; background: radial-gradient(#f4f080 60%, transparent 70%); }

.drop { display: grid; grid-template-columns: 1fr 17px; height: 19px; background: #fff; border: 1px solid #808078; border-right-color: #eee; border-bottom-color: #eee; box-shadow: inset 1px 1px #555; }
.drop select { grid-area: 1 / 1 / 2 / 3; appearance: none; border: 0; background: none; margin: 0; padding: 0 3px; font: inherit; color: #000; width: 100%; min-width: 0; }
.drop svg { grid-area: 1 / 2; pointer-events: none; margin: 1px 1px 1px 0; padding: 4px; width: 16px; height: 15px; border: 1px solid #fff; border-right-color: #777; border-bottom-color: #777; background: #e6e2d2; color: #000; }
.fmt .drop { height: 21px; background: #ece8d8; border-color: #c9c6b8; box-shadow: none; }
.fmt .drop select { color: #a8a69c; opacity: 1; padding: 0 2px; }
.fmt .drop svg { background: none; border: 0; color: #aaa; height: 18px; padding: 5px; }
.fmt .font { width: 130px; }
.fmt .size { width: 75px; }

.work { flex: 1; min-height: 0; display: grid; grid-template: 20px 1fr / 24px 20px 1fr; }
.dock { grid-row: 1 / 3; display: flex; flex-direction: column; align-items: flex-start; gap: 18px; padding-top: 6px; background: #cfd4de; }
.dock button { display: flex; align-items: center; writing-mode: vertical-rl; width: 20px; gap: 4px; padding: 3px 0 4px; border-radius: 0 4px 4px 0; background: linear-gradient(to right, #eef4f8, #e0e6ee); color: #555b66; font-size: 11px; box-shadow: 0 0 0 1px #e8eef4; }
.dock svg { width: 16px; height: 16px; }
.ruler-h { grid-column: 2 / 4; position: relative; display: flex; overflow: hidden; padding-left: 19px; border: 2px solid #88888c; border-width: 2px 0 2px 3px; background: #fff; }
.ruler-h span { flex: 0 0 100px; padding-left: 2px; border-left: 1px solid #555; font: 11px/14px "Liberation Sans", sans-serif; color: #444; background: repeating-linear-gradient(to right, transparent 0 9px, #555 9px 10px) 0 100% / 100% 3px no-repeat, linear-gradient(#555, #555) 49px 100% / 1px 6px no-repeat; }
.marks { position: absolute; left: 0; top: 0; width: 100%; height: 100%; }
.ruler-v { position: relative; display: flex; flex-direction: column; overflow: hidden; border: 2px solid #88888c; border-width: 0 2px 0 3px; background: #fff; padding-top: 2px; }
.ruler-v span { flex: 0 0 100px; writing-mode: vertical-rl; transform: rotate(180deg); text-align: right; border-bottom: 1px solid #555; font: 11px/13px "Liberation Sans", sans-serif; color: #444; padding: 0 0 2px 2px; background: repeating-linear-gradient(to top, transparent 0 9px, #555 9px 10px) 0 0 / 3px 100% no-repeat, linear-gradient(#555, #555) 0 50px / 6px 1px no-repeat; }

.canvas { overflow: hidden; background: #96a3bb; padding-left: 1px; }
.page { display: grid; grid-template-columns: 150px 1fr; width: 730px; height: 556px; border-top: 1px solid #777; box-shadow: 3px 3px #5c6679;
  background:
    linear-gradient(to right, rgba(255,255,255,.45), rgba(255,255,255,.1) 40px, rgba(255,255,255,.15) 80px, rgba(255,255,255,.6) 125px, rgba(255,255,255,.85) 155px, #fff 195px),
    repeating-linear-gradient(#b8d6d6 0 1px, #e4f0f0 1px 2px, #fff 2px 3px);
}
.side { display: flex; flex-direction: column; align-items: flex-start; }
.tag { align-self: flex-start; padding: 0 4px; line-height: 15px; font-size: 9px; font-family: "DejaVu Sans", sans-serif; border: 1px solid #eee; border-right-color: #000; border-bottom-color: #000; background: linear-gradient(to right, #a8a8b0, #c8c8cc); color: #000; }
.tag.orange { padding: 0 3px; border-color: #fff #000 #000 #fff; background: linear-gradient(#b87830, #d8a050); color: #6c4a20; }
.sitenav { width: 130px; margin: 48px 0 0 12px; border: 1px solid #101818; display: flex; flex-direction: column; background: #203c40; }
.sitenav a { height: 23px; margin-bottom: 1px; padding-left: 12px; font: 11px/22px "DejaVu Sans", sans-serif; text-decoration: none; color: #1090a8; background: linear-gradient(#b0d0d4, #8cb8bc 45%, #5a9094); box-shadow: inset 2px 2px 3px #4c8488, inset -4px -2px 3px #3c7478; }
.sitenav a.cur { margin: 0; font-weight: bold; color: #404040; background: linear-gradient(#8c8c8c, #b4b4b4 50%, #989898); box-shadow: inset 2px 2px 3px #666, inset -4px -2px 3px #666; }
.built { position: relative; width: 80px; height: 40px; margin: auto 0 20px 23px; border: 1px solid #111; background: #606060; color: #ddd; white-space: nowrap; overflow: hidden; font: 10px/11px Roboto, sans-serif; }
.built-top { height: 12px; padding-right: 4px; background: #484848; color: #b8b8b8; text-align: right; }
.built-mid { padding-left: 2px; }
.built-name { display: flex; justify-content: space-between; padding: 0 1px 0 2px; line-height: 15px; font-size: 11px; }
.built-name b { font: bold 16px/15px "Liberation Sans", sans-serif; color: #fff; -webkit-text-stroke: 1px #fff; }
.built svg { position: absolute; left: 1px; top: 1px; width: 11px; height: 11px; }

.content { display: flex; flex-direction: column; align-items: stretch; min-width: 0; padding: 10px 20px 25px 0;
  background:
    radial-gradient(circle, #dcdfe4 0 1px, transparent 1px) 5px 25px / 10px 50px,
    radial-gradient(circle, #dcdfe4 0 1px, transparent 1px) 25px 5px / 50px 10px; }
.banner { height: 45px; flex: none; border: 1px solid #000; text-align: center; font: bold 24px/44px "DejaVu Sans", sans-serif; color: #0f8cb0; background: linear-gradient(rgba(255,255,255,.25), rgba(255,255,255,0) 70%, rgba(60,120,120,.3)), repeating-linear-gradient(#a8cacd 0 1px, #98bcc0 1px 3px); box-shadow: inset 3px 3px 3px #4f8084, inset -3px -3px 3px #4f8084; }
.layout { display: flex; flex-direction: column; align-items: flex-start; height: 418px; margin-top: 10px; border: 1px solid #d4dcdc; border-right: 0; }
.sel { position: relative; margin: 34px 0 0 42px; border: 3px solid #0000d0; padding: 2px 2px 2px 1px; background: #fff; }
.sel table { border: 1px solid #112; border-spacing: 2px; background: linear-gradient(#48c8c8, #40e0e0); }
.sel td { width: 138px; height: 40px; padding: 0 3px; border: 1px solid #234; background: #0ff; color: #000; }
.sel td.impact { padding: 0 2px; font: 900 14px/16px Roboto, sans-serif; }
.sel td.small { padding: 0 2px; font: 10px/12px "Liberation Serif", serif; }
.sel td.red { padding: 3px; background: linear-gradient(red, red) content-box, #30e8e8; }
.sel td.red::before { content: ""; display: block; height: 32px; }
.h { position: absolute; width: 7px; height: 7px; }
.tl, .ml, .bl { left: -5px; } .tr, .mr, .br { right: -5px; } .tc, .bc { left: calc(50% - 3px); }
.tl, .tc, .tr { top: -5px; } .bl, .bc, .br { bottom: -5px; } .ml, .mr { top: calc(50% - 3px); }
.textnav { margin-top: 27px; border: 1px solid #000; background: #fff; text-align: center; font: 15px/18px "Liberation Serif", serif; color: #111; }
.textnav a { color: #1818a0; }

.palettes { position: absolute; left: 687px; top: 262px; bottom: 0; width: 252px; display: flex; flex-direction: column; gap: 1px; background: #77778f; }
.palette { display: flex; flex-direction: column; border: 2px solid #77778f; background: #e9edf4; }
.p1 { height: 300px; }
.p2 { flex: 1; }
.palette header { display: flex; align-items: center; height: 19px; padding: 0 3px 0 5px; background: linear-gradient(#fbfcfe, #dde3ee); }
.palette header .grip { height: 10px; }
.palette h3 { flex: 1; padding-left: 6px; font: bold 11px/16px "Noto Sans", "Open Sans", sans-serif; color: #1c4488; }
.palette header button { width: 16px; height: 16px; display: grid; place-items: center; }
.palette header svg { width: 10px; height: 10px; }
.tools { display: flex; align-items: center; height: 24px; padding-left: 4px; border: 1px solid #fff; border-radius: 4px; background: linear-gradient(#f8fafc, #e4e9f1 45%, #d3daea 60%, #e8edf5); }
.tools .more { margin-left: auto; align-self: stretch; width: 11px; display: flex; align-items: flex-end; background: #ccd0dc; }
.blk { color: #333; } .lst { color: #5878a8; }
.body { flex: 1; margin: 0 1px 1px; border: 1px solid #888898; background: linear-gradient(#e6e6f0, #babace); color: #000; padding: 2px 7px 0 3px; }
h4 { display: flex; align-items: center; gap: 3px; line-height: 14px; margin-right: 38px; }
h4::after { content: ""; flex: 1; height: 2px; border-top: 1px solid #a8a8a0; border-bottom: 1px solid #f4f4f4; }
.narrow { font-size: 10px; line-height: 14px; }
.align { display: grid; grid-template-columns: 51px 130px 44px; gap: 2px; margin-bottom: 3px; align-items: center; }
.align label { text-align: right; }
.align output { margin-left: 3px; height: 17px; line-height: 13px; border: 1px solid #999; border-right-color: #fff; border-bottom-color: #fff; text-align: center; }
.fit { display: flex; gap: 7px; padding: 7px 0 14px 62px; }
.fit button { color: #145c14; height: 14px; }
.fit .gray { color: #888; }
.fit svg { width: 14px; height: 14px; display: block; }
.over-label { display: block; padding-left: 7px; line-height: 10px; }
.two { display: grid; grid-template-columns: 1fr 69px; gap: 5px; align-items: start; padding: 2px 0 2px 7px; }
.btn { height: 18px; background: #ece9dc; border: 1px solid #fff; border-right-color: #77776c; border-bottom-color: #77776c; box-shadow: 1px 1px #444; white-space: nowrap; text-align: center; }
.checks { display: grid; grid-template-columns: 1fr 69px; gap: 3px 5px; padding: 1px 0 0 16px; }
.checks label:first-child { grid-column: 1 / 3; }
.palette label { white-space: nowrap; }
.checks label, .fixed, .repeat label { display: flex; align-items: center; gap: 4px; height: 14px; }
input[type=checkbox] { appearance: none; flex: none; width: 13px; height: 13px; margin: 0; background: #fff; border: 1px solid #777; border-right-color: #eee; border-bottom-color: #eee; display: grid; place-items: center; }
input:checked::before { content: ""; width: 4px; height: 7px; border: solid #000; border-width: 0 2px 2px 0; transform: rotate(40deg); }

.p2 .body { padding: 8px 0 0 9px; font-size: 11px; line-height: 16px; }
.bild { display: flex; align-items: center; height: 20px; }
.bild label { width: 20px; }
.bild .drop { width: 102px; margin-left: 1px; }
.bild .dots { width: 20px; height: 19px; margin: 0 6px; }
.colorpick { position: relative; z-index: 2; }
.bucket { width: 32px; height: 22px; display: grid; place-items: center; border: 1px solid #3868b0; border-bottom: 0; background: #f2efe2; }
.bucket svg { width: 30px; height: 18px; }
.popup { position: absolute; left: -1px; top: 21px; width: 165px; padding: 10px; border: 1px solid #3868b0; background: #ece9d8; }
.popup .auto { display: flex; align-items: center; width: 100%; height: 20px; border: 1px solid #aaa8a0; padding-left: 4px; }
.popup .auto svg { width: 11px; height: 11px; }
.auto span { flex: 1; text-align: center; }
.sw { display: grid; grid-template-columns: repeat(8, 17px); grid-auto-rows: 17px; place-items: center; border: 1px solid #000; }
.sw.recent { padding-bottom: 1px; }
.sw i { width: 11px; height: 11px; border: 1px solid #a4a294; }
.sw b { width: 17px; height: 17px; display: grid; place-items: center; border: 1px solid #685828; background: #d8b070; }
.sw b.hot { background: #f08060; }
.sw.grid { border-top: 0; padding-bottom: 9px; }
.popup .mehr { width: 100%; height: 23px; border: 1px solid #aaa8a0; border-top: 0; padding-bottom: 4px; }
.pointer { position: absolute; left: 112px; top: 80px; width: 12px; height: 20px; }
.fixed { padding-left: 23px; margin: 10px 0; }
.p2 h4 { line-height: 16px; gap: 6px; margin-right: 60px; }
.repeat { display: grid; grid-template-columns: 103px 1fr; padding: 6px 0 10px 12px; }
.posgrid { display: grid; grid-template-columns: 61px 68px; gap: 6px; align-items: center; padding-top: 2px; }
.posgrid label { text-align: right; }
.drop.blue { border-color: #fff; box-shadow: none; grid-template-columns: 1fr 13px; }
.drop.blue svg { width: 12px; height: 17px; padding: 3px; margin: 0; border: 0; background: linear-gradient(#dce8fc, #a4c0f0); }
.tabs { display: flex; height: 26px; padding: 0 6px; align-items: flex-start; gap: 6px; background: #cdd3e0; border-top: 1px solid #6898d8; color: #5c646c; font-size: 11px; }
.tabs button { display: flex; align-items: center; gap: 3px; min-width: 75px; height: 21px; padding: 0 4px; white-space: nowrap; }
.tabs button.cur { background: #f2f6fa; border-radius: 0 0 4px 4px; }
.tabs svg { width: 17px; height: 17px; }

.c-0000ff { background: #00f; } .c-00ffff { background: #0ff; } .c-ff0000 { background: #f00; } .c-ffffff { background: #fff; }
.c-000000 { background: #000; } .c-003399 { background: #039; } .c-003333 { background: #033; } .c-003300 { background: #030; }
.c-663300 { background: #630; } .c-800000 { background: #800000; } .c-993333 { background: #933; } .c-333333 { background: #333; }
.c-000080 { background: #000080; } .c-0066ff { background: #06f; } .c-008080 { background: #008080; } .c-008000 { background: #008000; }
.c-808000 { background: #808000; } .c-996666 { background: #966; } .c-808080 { background: #808080; } .c-0099ff { background: #09f; }
.c-00cc99 { background: #0c9; } .c-669933 { background: #693; } .c-cccc33 { background: #cc3; } .c-ff6633 { background: #f63; }
.c-660066 { background: #606; } .c-999999 { background: #999; } .c-ff00ff { background: #f0f; } .c-00ccff { background: #0cf; }
.c-00ff00 { background: #0f0; } .c-ffff00 { background: #ff0; } .c-ffcc00 { background: #fc0; } .c-663399 { background: #639; }
.c-c0c0c0 { background: #c0c0c0; } .c-cc99ff { background: #c9f; } .c-99ccff { background: #9cf; } .c-99ffff { background: #9ff; }
.c-ccffcc { background: #cfc; } .c-ffffcc { background: #ffc; } .c-ffcc99 { background: #fc9; } .c-ff99cc { background: #f9c; }
```
